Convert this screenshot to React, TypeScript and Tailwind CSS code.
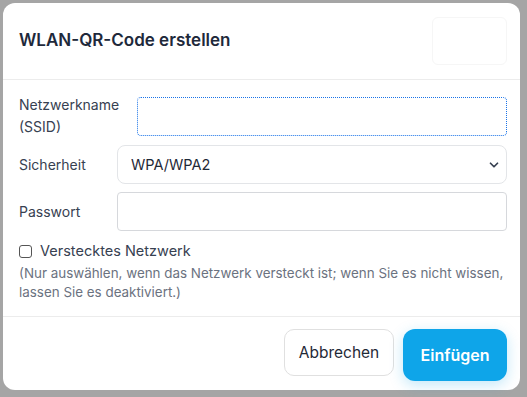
import { ChevronDown } from 'lucide-react';

export default function App() {
  return (
    <div
      className="h-[397px] w-[527px] bg-[#a5a5a5] p-[3px] overflow-hidden"
      style={{ fontFamily: 'Inter, "Noto Sans", sans-serif' }}
    >
      <div className="w-[517px] h-[387px] bg-white rounded-[12px] flex flex-col">
        {/* Header */}
        <div className="h-[77px] flex items-center justify-between pl-[16px] pr-[13px] border-b border-[#ececec] shrink-0">
          <h2 className="text-[17px] font-semibold text-[#1e293b]">WLAN-QR-Code erstellen</h2>
          <button className="w-[75px] h-[48px] rounded-[6px] border border-[#f6f6f6] bg-white" aria-label="Schließen"></button>
        </div>

        {/* Body */}
        <div className="flex-1 pl-[16px] pr-[13px] pt-[14px] flex flex-col">
          <div className="flex items-center">
            <label className="w-[118px] text-[14px] leading-[22px] text-[#374151] shrink-0">
              Netzwerkname<br />(SSID)
            </label>
            <input
              className="flex-1 h-[39px] rounded-[4px] border border-dotted border-[#1a73e8] outline-none px-3 text-[14px]"
            />
          </div>

          <div className="flex items-center mt-[7px]">
            <label className="w-[98px] text-[14px] text-[#374151] shrink-0">Sicherheit</label>
            <div className="relative flex-1">
              <select className="appearance-none w-full h-[39px] rounded-[8px] border border-[#e3e5e8] bg-white pl-[13px] text-[14.5px] text-[#1f2937] outline-none">
                <option>WPA/WPA2</option>
                <option>WEP</option>
                <option>Keine</option>
              </select>
              <ChevronDown className="absolute right-[6px] top-[13px] w-[14px] h-[14px] text-[#374151] pointer-events-none" strokeWidth={3} />
            </div>
          </div>

          <div className="flex items-center mt-[8px]">
            <label className="w-[98px] text-[14px] text-[#374151] shrink-0">Passwort</label>
            <input
              type="password"
              className="flex-1 h-[39px] rounded-[4px] border border-[#d6d8dc] outline-none px-3 text-[14px]"
            />
          </div>

          <label className="flex items-center mt-[10px] gap-[8px] h-[20px]">
            <span className="w-[13px] h-[13px] rounded-[3px] border border-[#555] bg-white"></span>
            <span className="text-[14.5px] text-[#374151]">Verstecktes Netzwerk</span>
          </label>

          <p className="mt-[3px] text-[13.4px] leading-[19px] text-[#6b7280]">
            (Nur auswählen, wenn das Netzwerk versteckt ist; wenn Sie es nicht wissen, lassen Sie es deaktiviert.)
          </p>
        </div>

        {/* Footer */}
        <div className="h-[74px] border-t border-[#ececec] flex justify-end items-start gap-[9px] pr-[13px] pt-[12px] shrink-0">
          <button className="w-[110px] h-[47px] rounded-[10px] border border-[#e0e0e0] bg-white text-[15.5px] text-[#1f2937]">
            Abbrechen
          </button>
          <button className="w-[104px] h-[52px] rounded-[12px] bg-[#0ea5e9] text-white text-[16px] font-semibold shadow-[0_4px_14px_rgba(14,165,233,0.25)]">
            Einfügen
          </button>
        </div>
      </div>
    </div>
  );
}
